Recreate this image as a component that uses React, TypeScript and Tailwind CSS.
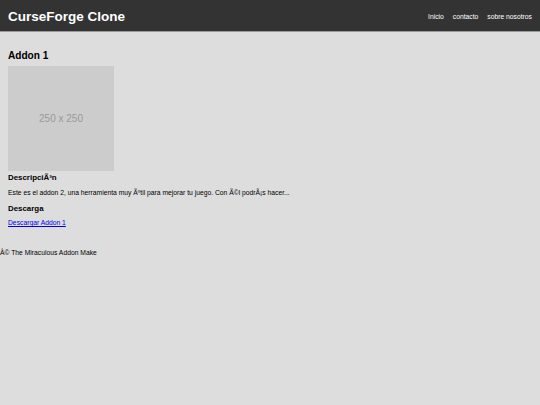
import React from 'react';

const navLinks = ['Inicio', 'contacto', 'sobre nosotros'];

const App: React.FC = () => {
  return (
    <div className="min-h-[405px] bg-[#dddddd] text-black font-['Liberation_Sans',Arial,sans-serif]">
      <header className="h-[32px] bg-[#333333] border-b border-[#9a9a9a] flex items-center justify-between pl-[8px] pr-[8px] pt-[2px]">
        <h1 className="text-[13.5px] leading-[16px] font-bold text-white">CurseForge Clone</h1>
        <nav className="flex gap-[9px] text-[6.75px] leading-[8px] text-white">
          {navLinks.map((link) => (
            <a key={link} href="#" className="text-white">
              {link}
            </a>
          ))}
        </nav>
      </header>

      <main className="px-[8px]">
        <h2 className="pt-[18px] text-[10.1px] leading-[12px] font-bold">Addon 1</h2>
        <div className="mt-[4px] w-[106px] h-[105px] bg-[#cccccc] flex items-center justify-center text-[#999999] text-[10px]">
          250 x 250
        </div>
        <h3 className="mt-[2px] text-[7.9px] leading-[9px] font-bold">DescripciÃ³n</h3>
        <p className="mt-[7px] text-[6.75px] leading-[8px]">
          Este es el addon 2, una herramienta muy Ãºtil para mejorar tu juego. Con Ã©l podrÃ¡s hacer...
        </p>
        <h3 className="mt-[7px] text-[7.9px] leading-[9px] font-bold">Descarga</h3>
        <a href="#" className="block mt-[6px] w-fit text-[6.75px] leading-[8px] text-[#0000ee] underline">
          Descargar Addon 1
        </a>
      </main>

      <footer className="mt-[22px] text-[6.75px] leading-[8px]">
        Â© The Miraculous Addon Make
      </footer>
    </div>
  );
};

export default App;
